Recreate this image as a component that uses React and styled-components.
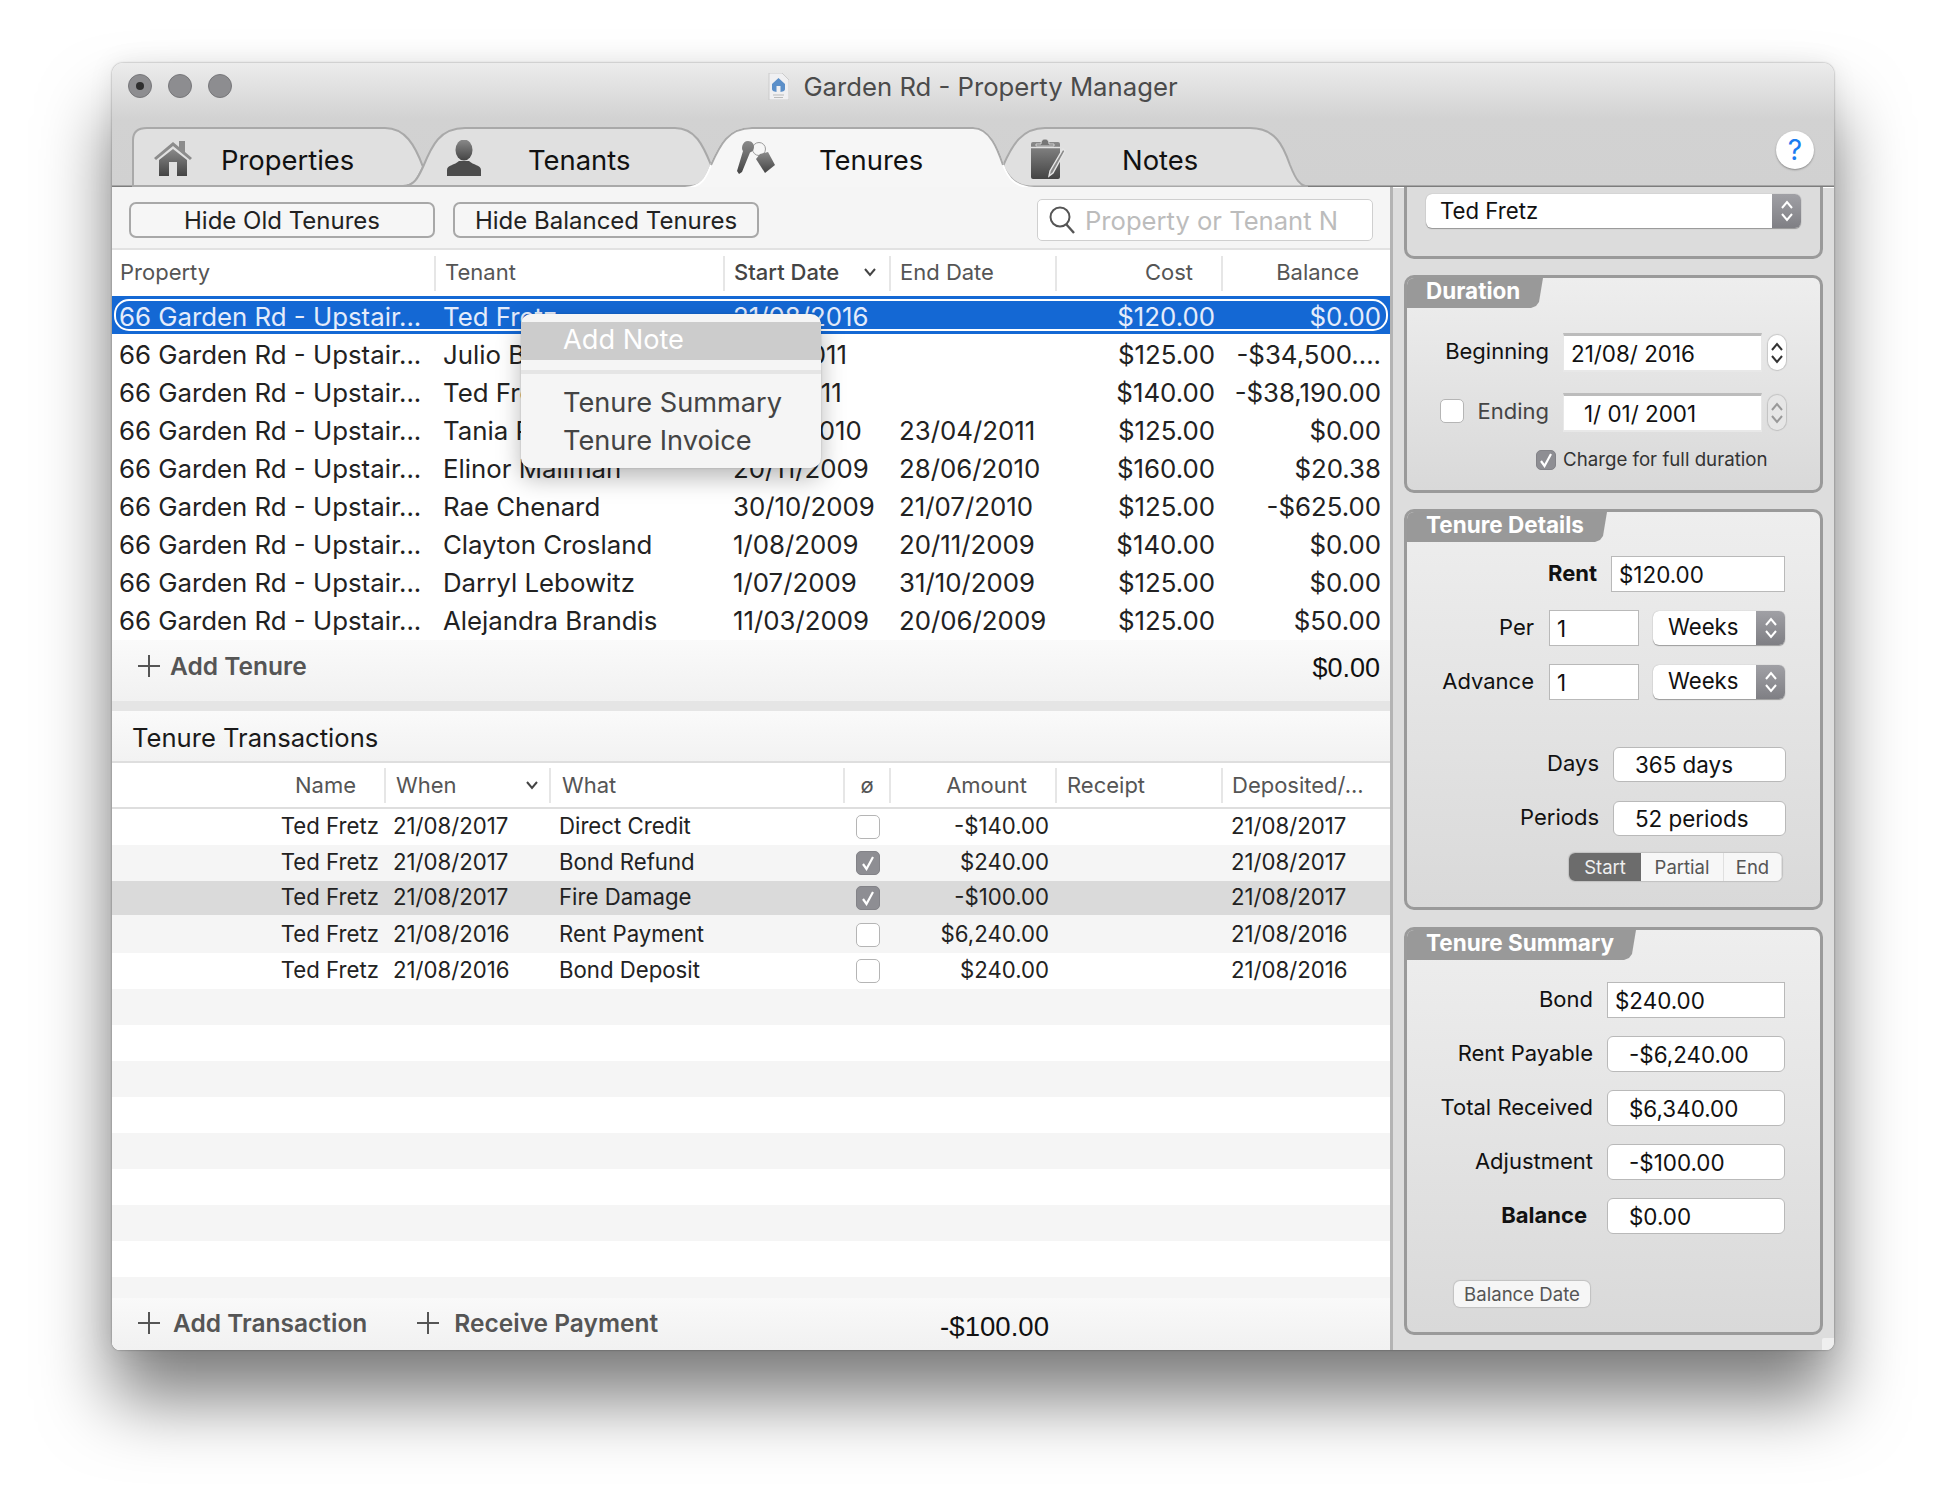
import React from 'react'
import styled, { createGlobalStyle } from 'styled-components'

const UI = `Inter, "Open Sans", sans-serif`
const HELV = `"Liberation Sans", Arial, sans-serif`

const GlobalStyle = createGlobalStyle`
  html, body { margin: 0; background: #fff; overflow: hidden; }
  body { font-family: ${UI}; color: #222; }
  * { box-sizing: border-box; }
`

const Page = styled.div`
  width: 1946px;
  height: 1510px;
  padding: 63px 0 0 112px;
`

const Window = styled.div`
  position: relative;
  width: 1722px;
  height: 1287px;
  display: flex;
  flex-direction: column;
  border-radius: 11px 11px 8px 8px;
  overflow: hidden;
`

const Shadow = styled.div`
  width: 1722px;
  height: 1287px;
  border-radius: 11px 11px 8px 8px;
  box-shadow: 0 50px 70px rgba(0, 0, 0, 0.5), 0 0 26px rgba(0, 0, 0, 0.08), 0 0 2px rgba(0, 0, 0, 0.45);
`

const TitleArea = styled.div`
  position: relative;
  height: 124px;
  flex: none;
  background: linear-gradient(#ececec 0, #d2d2d2 56px, #d1d1d1 100%);
`

const TitleBar = styled.div`
  position: relative;
  height: 46px;
  display: flex;
  align-items: center;
  justify-content: center;
  gap: 14px;
`

const Lights = styled.div`
  position: absolute;
  left: 16px;
  top: 11px;
  display: flex;
  gap: 16px;
`

const Light = styled.span`
  width: 24px;
  height: 24px;
  border-radius: 50%;
  background: #8d8d90;
  border: 1px solid #77777a;
  display: flex;
  align-items: center;
  justify-content: center;
  &::after {
    content: '';
    width: ${p => (p.$dot ? '8px' : '0')};
    height: ${p => (p.$dot ? '8px' : '0')};
    border-radius: 50%;
    background: #2e2e2e;
  }
`

const WindowTitle = styled.span`
  font-size: 25.7px;
  color: #4b4b4b;
  white-space: nowrap;
`

const TabShapes = styled.svg`
  position: absolute;
  left: 0;
  bottom: 0;
  display: block;
`

const TabRow = styled.div`
  position: relative;
  height: 78px;
  display: flex;
  padding: 19px 0 0 21px;
`

const Tab = styled.div`
  width: ${p => p.$w}px;
  height: 60px;
  display: flex;
  align-items: center;
  padding-top: 4px;
  padding-left: ${p => p.$pad}px;
  font-size: 27.4px;
  color: #111;
`

const TabIcon = styled.span`
  width: ${p => p.$slot}px;
  flex: none;
  display: flex;
  align-items: center;
  margin-top: -4px;
`

const Help = styled.div`
  position: absolute;
  left: 1664px;
  top: 22px;
  width: 38px;
  height: 38px;
  border-radius: 50%;
  background: #fff;
  box-shadow: 0 1px 2px rgba(0, 0, 0, 0.35);
  display: flex;
  align-items: center;
  justify-content: center;
  font-size: 28px;
  color: #1a7cf0;
`

const Main = styled.div`
  flex: 1;
  min-height: 0;
  display: flex;
`

const LeftPane = styled.div`
  position: relative;
  width: 1278px;
  flex: none;
  display: flex;
  flex-direction: column;
  background: #fff;
`

const Toolbar = styled.div`
  height: 63px;
  flex: none;
  display: flex;
  align-items: center;
  padding: 5px 17px 0;
  gap: 18px;
  background: #f5f5f5;
  border-bottom: 2px solid #e2e2e2;
`

const ToolButton = styled.div`
  width: 306px;
  height: 36px;
  border-radius: 7px;
  border: 2px solid #a8a8a8;
  background: #f6f6f6;
  display: flex;
  align-items: center;
  justify-content: center;
  font-size: 24px;
  color: #222;
`

const Search = styled.div`
  width: 336px;
  height: 42px;
  margin-left: auto;
  border-radius: 5px;
  background: #fff;
  border: 1px solid #cfcfcf;
  display: flex;
  align-items: center;
  gap: 10px;
  padding-left: 11px;
  font-size: 25.6px;
  color: #bcbcbc;
  white-space: nowrap;
  overflow: hidden;
`

const SearchText = styled.span`
  padding-top: 1px;
`

const HeadRow = styled.div`
  height: ${p => p.$h}px;
  flex: none;
  display: grid;
  grid-template-columns: ${p => p.$cols};
  align-items: center;
  background: #fff;
  font-size: 22px;
  color: #555;
  padding-left: ${p => p.$inset || 0}px;
  & > div {
    padding-bottom: ${p => p.$lift || 0}px;
  }
`

const HeadCell = styled.div`
  height: 35px;
  display: flex;
  align-items: center;
  justify-content: ${p => (p.$align === 'right' ? 'flex-end' : p.$align === 'center' ? 'center' : 'space-between')};
  padding: 0 ${p => p.$pr || 0}px 0 ${p => p.$pl || 0}px;
  border-right: ${p => (p.$last ? 'none' : '2px solid #e6e6e6')};
  font-weight: ${p => (p.$sorted ? 500 : 400)};
  color: ${p => (p.$sorted ? '#444' : '#555')};
`

const Chevron = () => (
  <svg width="14" height="10" viewBox="0 0 14 10">
    <path d="M2 2 L7 8 L12 2" fill="none" stroke="#444" strokeWidth="2" />
  </svg>
)

const TenureBody = styled.div`
  height: 344px;
  flex: none;
  display: grid;
  grid-auto-rows: 38px;
`

const TenureRow = styled.div`
  position: relative;
  display: grid;
  grid-template-columns: 323px 290px 166px 166px 150px 166px;
  align-items: center;
  padding: 2px 0 0 8px;
  font-size: 25.8px;
  white-space: nowrap;
  color: ${p => (p.$selected ? '#e4ecfb' : '#222')};
  background: ${p => (p.$selected ? '#1468d4' : 'transparent')};
  &::after {
    content: '';
    display: ${p => (p.$selected ? 'block' : 'none')};
    position: absolute;
    left: 2px;
    right: 2px;
    top: 3px;
    bottom: 3px;
    border: 2px solid #fff;
    border-radius: 15px;
  }
`

const PropertyText = styled.span`
  margin-left: -1px;
`

const Money = styled.span`
  text-align: right;
`

const SumFooter = styled.div`
  height: 61px;
  flex: none;
  display: flex;
  padding: 0 10px 10px 26px;
  align-items: center;
  justify-content: space-between;
  background: linear-gradient(#fafafa, #f1f1f1);
`

const AddLink = styled.div`
  display: flex;
  align-items: center;
  gap: ${p => p.$gap || 10}px;
  margin-left: ${p => p.$ml || 0}px;
  font-size: 24.5px;
  font-weight: 600;
  color: #555;
  white-space: nowrap;
`

const Plus = () => (
  <svg width="22" height="22" viewBox="0 0 22 22">
    <path d="M11 0 V22 M0 11 H22" stroke="#555" strokeWidth="2" />
  </svg>
)

const Total = styled.span`
  font-family: ${HELV};
  font-size: 27px;
  color: #111;
`

const SumTotal = styled(Total)`
  margin-top: 5px;
`

const SplitBar = styled.div`
  height: 10px;
  flex: none;
  background: #e5e5e5;
`

const SectionTitle = styled.div`
  height: 52px;
  flex: none;
  display: flex;
  align-items: center;
  padding: 2px 0 0 20px;
  font-size: 25.6px;
  color: #1a1a1a;
  background: linear-gradient(#fafafa, #f2f2f2);
  border-bottom: 2px solid #dedede;
`

const TransBody = styled.div`
  flex: 1;
  min-height: 0;
  overflow: hidden;
  border-top: 2px solid #dedede;
  display: grid;
  grid-auto-rows: 36px;
`

const TransRow = styled.div`
  display: grid;
  grid-template-columns: 267px 180px 297px 35px 158px 182px 159px;
  align-items: center;
  padding-bottom: 3px;
  font-size: 22.2px;
  white-space: nowrap;
  color: #222;
  background: ${p => (p.$selected ? '#dadada' : p.$odd ? '#f5f5f5' : '#fff')};
  border-bottom: ${p => (p.$selected ? '2px solid #f5f5f5' : 'none')};
`

const RightText = styled.span`
  text-align: right;
`

const WhenText = styled.span`
  padding-left: 14px;
`

const VoidCell = styled.span`
  margin-top: 3px;
`

const Box = styled.span`
  width: ${p => p.$size || 24}px;
  height: ${p => p.$size || 24}px;
  flex: none;
  border-radius: 5px;
  display: flex;
  align-items: center;
  justify-content: center;
  background: ${p => (p.$on ? '#8e8e93' : '#fff')};
  border: 1px solid ${p => (p.$on ? '#838388' : '#b5b5b5')};
`

const Checkbox = ({ on, size }) => (
  <Box $on={on} $size={size}>
    {on && (
      <svg width="14" height="16" viewBox="0 0 14 16">
        <path d="M2 9 L5.5 14 L12 2" fill="none" stroke="#fff" strokeWidth="2.2" />
      </svg>
    )}
  </Box>
)

const TransFooter = styled.div`
  height: 52px;
  flex: none;
  display: flex;
  align-items: center;
  padding: 0 0 2px 26px;
  background: linear-gradient(#f9f9f9, #f1f1f1);
`

const TransTotal = styled(Total)`
  margin: 8px 0 0 282px;
  font-size: 27.6px;
`

const ContextMenu = styled.div`
  position: absolute;
  left: 409px;
  top: 127px;
  width: 300px;
  height: 154px;
  padding-top: 8px;
  border-radius: 10px;
  background: #f5f5f5;
  box-shadow: 0 10px 24px rgba(0, 0, 0, 0.28), 0 0 2px rgba(0, 0, 0, 0.2);
  font-size: 27.2px;
  color: #444;
`

const MenuItem = styled.div`
  height: 38px;
  display: flex;
  align-items: center;
  padding: 0 0 3px 42px;
  background: ${p => (p.$active ? '#cccccc' : 'transparent')};
  color: ${p => (p.$active ? '#fff' : '#444')};
`

const MenuRule = styled.div`
  height: 4px;
  margin: 10px 0 11px;
  background: #e5e5e5;
`

const RightPane = styled.div`
  flex: 1;
  display: flex;
  flex-direction: column;
  gap: 16px;
  padding: 0 11px 0 11px;
  background: #dddddd;
  border-left: 3px solid #b4b4b4;
  box-shadow: inset 0 1px 0 #fff;
`

const Group = styled.div`
  height: ${p => p.$h}px;
  flex: none;
  margin-top: ${p => p.$mt || 0}px;
  display: flex;
  flex-direction: column;
  align-items: flex-start;
  border: 3px solid #9a9a9a;
  border-top-width: ${p => (p.$clipped ? 0 : 3)}px;
  border-radius: ${p => (p.$clipped ? '0 0 10px 10px' : '10px')};
  background: linear-gradient(#eeeeee, #d9d9d9);
  overflow: hidden;
`

const TopGroup = styled(Group)`
  padding: 7px 0 0 19px;
  background: #dcdcdc;
`

const GroupTab = styled.div`
  width: ${p => p.$w}px;
  height: 30px;
  flex: none;
  display: flex;
  align-items: center;
  padding: 0 0 5px 19px;
  background: #999999;
  font-size: 22.5px;
  font-weight: 700;
  color: #fff;
  white-space: nowrap;
  clip-path: polygon(0 0, 100% 0, calc(100% - 4px) calc(100% - 6px), calc(100% - 7px) calc(100% - 2px), calc(100% - 12px) 100%, 0 100%);
`

const FieldRow = styled.div`
  display: flex;
  align-items: center;
  margin-top: ${p => p.$mt}px;
  padding-left: ${p => p.$pl || 0}px;
`

const Label = styled.div`
  width: ${p => p.$w}px;
  flex: none;
  display: flex;
  align-items: center;
  justify-content: flex-end;
  gap: 13px;
  padding: 0 ${p => p.$pr || 0}px 3px 0;
  margin-right: ${p => p.$gap || 14}px;
  font-size: 22px;
  font-weight: ${p => (p.$bold ? 700 : 400)};
  color: ${p => p.$color || '#111'};
  white-space: nowrap;
`

const Field = styled.div`
  width: ${p => p.$w}px;
  height: ${p => p.$h || 36}px;
  flex: none;
  display: flex;
  align-items: center;
  padding-left: ${p => p.$pl || 7}px;
  font-size: 22.4px;
  color: #111;
  white-space: nowrap;
  background: #fff;
  border: 1px solid #b9b9b9;
  border-radius: ${p => (p.$round ? 6 : 0)}px;
`

const DateField = styled(Field)`
  height: 39px;
  border-width: 3px 1px 2px;
  border-color: #bcbcbc #e8e8e8 #e8e8e8;
`

const Stepper = styled.div`
  width: 18px;
  height: 35px;
  margin-left: 6px;
  flex: none;
  border-radius: 9px;
  background: ${p => (p.$off ? '#e6e6e6' : '#fff')};
  box-shadow: 0 0 1px 1px rgba(0, 0, 0, 0.14);
  display: flex;
  align-items: center;
  justify-content: center;
`

const UpDown = ({ color = '#fff', width = 16, height = 26, sw = 2 }) => (
  <svg width={width} height={height} viewBox="0 0 16 26">
    <path d="M3 10 L8 4 L13 10 M3 16 L8 22 L13 16" fill="none" stroke={color} strokeWidth={sw} />
  </svg>
)

const SelectBox = styled.div`
  width: ${p => p.$w}px;
  height: 34px;
  flex: none;
  margin-left: ${p => p.$ml || 0}px;
  display: flex;
  background: #fff;
  border-radius: 6px;
  overflow: hidden;
  box-shadow: 0 1px 1px rgba(0, 0, 0, 0.3), 0 0 1px rgba(0, 0, 0, 0.3);
  font-size: 22.2px;
  color: #111;
`

const SelectValue = styled.span`
  flex: 1;
  display: flex;
  align-items: center;
  padding: 0 0 ${p => p.$pb || 3}px ${p => p.$pl}px;
`

const SelectArrow = styled.span`
  width: 29px;
  flex: none;
  display: flex;
  align-items: center;
  justify-content: center;
  background: linear-gradient(#a0a0a5, #7f7f84);
`

const SmallText = styled.span`
  margin-left: 7px;
  font-size: 18.7px;
  color: #333;
  white-space: nowrap;
`

const Segments = styled.div`
  width: 213px;
  height: 28px;
  display: flex;
  border-radius: 6px;
  overflow: hidden;
  box-shadow: 0 0 1px 1px rgba(0, 0, 0, 0.12);
  background: #f7f7f7;
`

const Segment = styled.span`
  width: ${p => p.$w}px;
  flex: ${p => (p.$w ? 'none' : 1)};
  display: flex;
  align-items: center;
  justify-content: center;
  font-size: 18.5px;
  color: ${p => (p.$on ? '#f0f0f0' : '#555')};
  background: ${p => (p.$on ? '#6c6c6c' : 'transparent')};
  border-right: ${p => (p.$on ? 'none' : '1px solid #e0e0e0')};
`

const SmallButton = styled.div`
  width: 136px;
  height: 26px;
  margin-left: 47px;
  border-radius: 6px;
  background: #f6f6f6;
  box-shadow: 0 0 1px 1px rgba(0, 0, 0, 0.12);
  display: flex;
  align-items: center;
  justify-content: center;
  font-size: 18.6px;
  color: #555;
  white-space: nowrap;
`

const ResizeCorner = styled.div`
  position: absolute;
  right: 0;
  bottom: 0;
  width: 12px;
  height: 12px;
  background: #efefef;
  border-top-left-radius: 2px;
`

const Shade = ({ id }) => (
  <defs>
    <linearGradient id={id} x1="0" y1="0" x2="0" y2="1">
      <stop offset="0" stopColor="#8a8a8a" />
      <stop offset="1" stopColor="#444" />
    </linearGradient>
  </defs>
)

const HouseIcon = () => (
  <svg width="38" height="36" viewBox="0 0 38 36">
    <Shade id="house" />
    <path d="M0 18 L19 2 L25 7 V1 L31 1 V12 L38 18 L36 20 L19 6 L2 20 Z" fill="#8c8c8c" />
    <path d="M5 20 L19 9 L33 20 V36 H23 V22 H15 V36 H5 Z" fill="url(#house)" />
  </svg>
)

const PersonIcon = () => (
  <svg width="34" height="36" viewBox="0 0 34 36">
    <Shade id="person" />
    <ellipse cx="17" cy="10" rx="8.5" ry="10.5" fill="url(#person)" />
    <path d="M0 36 V30 C0 25 8 25 12 21 H22 C26 25 34 25 34 30 V36 Z" fill="#4c4c4c" />
  </svg>
)

const KeysIcon = () => (
  <svg width="39" height="34" viewBox="0 0 39 34">
    <Shade id="keys" />
    <circle cx="22" cy="8" r="6.5" fill="none" stroke="#999" strokeWidth="1" />
    <path d="M11 0 C15 0 17 3 17 6 C17 9 15 11 13 11.5 L5 31 L2 33 L0 30 L6 10 C4 8 5 0 11 0 Z" fill="url(#keys)" />
    <path d="M23 13 L31 11 L38 24 L28 32 L19 18 Z" fill="url(#keys)" />
  </svg>
)

const ClipboardIcon = () => (
  <svg width="35" height="41" viewBox="0 0 35 41">
    <Shade id="clip" />
    <rect x="0" y="4" width="29" height="37" rx="2" fill="url(#clip)" />
    <path d="M10 6 Q10 1 14 1 Q18 1 18 6 H23 V8 H5 V6 Z" fill="#777" stroke="#e6e6e6" strokeWidth="0.8" />
    <path d="M0 9.5 H29" stroke="#e2e2e2" strokeWidth="1.4" />
    <path d="M32 11 L34 13 L22 35 L18 38 L19 33 Z" fill="#888" stroke="#e6e6e6" strokeWidth="1.4" />
  </svg>
)

const SearchIcon = () => (
  <svg width="26" height="28" viewBox="0 0 26 28" style={{ flex: 'none' }}>
    <circle cx="11" cy="11" r="9.5" fill="none" stroke="#555" strokeWidth="2" />
    <path d="M17 18 L25 27" stroke="#555" strokeWidth="2.4" />
  </svg>
)

const DocIcon = () => (
  <svg width="21" height="27" viewBox="0 0 21 27">
    <path d="M1 0 H14 L21 7 V27 H1 Z" fill="#f0f0f2" stroke="#c4c4c4" strokeWidth="0.8" />
    <path d="M4 11 L10.5 5 L17 11 V16 C17 18 15 19 10.5 19 C6 19 4 18 4 16 Z" fill="#5b8fc9" />
    <path d="M8.5 19 V13 H12.5 V19 Z" fill="#f0f0f2" />
    <path d="M5 22 H16 M6 24.5 H15" stroke="#bbb" strokeWidth="1" />
  </svg>
)

const tenures = [
  ['66 Garden Rd - Upstair...', 'Ted Fretz', '21/08/2016', '', '$120.00', '$0.00'],
  ['66 Garden Rd - Upstair...', 'Julio Bernstein', '1/05/2011', '', '$125.00', '-$34,500....'],
  ['66 Garden Rd - Upstair...', 'Ted Fretz', '1/01/2011', '', '$140.00', '-$38,190.00'],
  ['66 Garden Rd - Upstair...', 'Tania Ruiz', '11/07/2010', '23/04/2011', '$125.00', '$0.00'],
  ['66 Garden Rd - Upstair...', 'Elinor Mailman', '20/11/2009', '28/06/2010', '$160.00', '$20.38'],
  ['66 Garden Rd - Upstair...', 'Rae Chenard', '30/10/2009', '21/07/2010', '$125.00', '-$625.00'],
  ['66 Garden Rd - Upstair...', 'Clayton Crosland', '1/08/2009', '20/11/2009', '$140.00', '$0.00'],
  ['66 Garden Rd - Upstair...', 'Darryl Lebowitz', '1/07/2009', '31/10/2009', '$125.00', '$0.00'],
  ['66 Garden Rd - Upstair...', 'Alejandra Brandis', '11/03/2009', '20/06/2009', '$125.00', '$50.00'],
]

const transactions = [
  ['Ted Fretz', '21/08/2017', 'Direct Credit', false, '-$140.00', '21/08/2017'],
  ['Ted Fretz', '21/08/2017', 'Bond Refund', true, '$240.00', '21/08/2017'],
  ['Ted Fretz', '21/08/2017', 'Fire Damage', true, '-$100.00', '21/08/2017'],
  ['Ted Fretz', '21/08/2016', 'Rent Payment', false, '$6,240.00', '21/08/2016'],
  ['Ted Fretz', '21/08/2016', 'Bond Deposit', false, '$240.00', '21/08/2016'],
]

const summary = [
  ['Rent Payable', '-$6,240.00'],
  ['Total Received', '$6,340.00'],
  ['Adjustment', '-$100.00'],
]

const emptyRows = Array.from({ length: 9 })

const Tabs = () => (
  <TabShapes width="1722" height="68" viewBox="112 119 1722 68">
    <path d="M112 186.5 H1834" stroke="#7d7d7d" strokeWidth="2" />
    <path d="M1003 166 C1012 145 1022 128 1045 128 L1250 128 C1275 128 1283 145 1290 165 C1296 180 1300 186 1308 186.5 L1030 186.5 C1015 186 1008 176 1003 166 Z" fill="#e0e0e0" stroke="#a9a9a9" strokeWidth="2" />
    <path d="M133 186 L133 140 Q133 128 147 128 L385 128 C405 128 415 145 423 167 C418 178 414 186 403 186 Z" fill="#e0e0e0" stroke="#a9a9a9" strokeWidth="2" />
    <path d="M423 167 C432 145 440 128 465 128 L675 128 C695 128 703 145 711 165 C706 178 702 186 690 186 L403 186 C414 186 418 178 423 167 Z" fill="#e0e0e0" stroke="#a9a9a9" strokeWidth="2" />
    <path d="M685 188 C702 187 706 178 711 165 C720 145 728 128 752 128 L973 128 C990 128 998 150 1003 165 C1008 178 1015 187 1034 188 Z" fill="#f6f6f6" stroke="#ffffff" strokeWidth="2" />
    <path d="M711 165 C720 145 728 128 752 128 L973 128 C990 128 998 150 1003 165" fill="none" stroke="#a9a9a9" strokeWidth="2" />
  </TabShapes>
)

const App = () => (
  <Page>
    <GlobalStyle />
    <Shadow>
      <Window>
        <TitleArea>
          <TitleBar>
            <Lights>
              <Light $dot />
              <Light />
              <Light />
            </Lights>
            <DocIcon />
            <WindowTitle>Garden Rd - Property Manager</WindowTitle>
          </TitleBar>
          <Tabs />
          <TabRow>
            <Tab $w={290} $pad={21}><TabIcon $slot={67}><HouseIcon /></TabIcon>Properties</Tab>
            <Tab $w={288} $pad={24}><TabIcon $slot={81}><PersonIcon /></TabIcon>Tenants</Tab>
            <Tab $w={294} $pad={26}><TabIcon $slot={82}><KeysIcon /></TabIcon>Tenures</Tab>
            <Tab $w={300} $pad={26}><TabIcon $slot={91}><ClipboardIcon /></TabIcon>Notes</Tab>
            <Help>?</Help>
          </TabRow>
        </TitleArea>
        <Main>
          <LeftPane>
            <Toolbar>
              <ToolButton>Hide Old Tenures</ToolButton>
              <ToolButton>Hide Balanced Tenures</ToolButton>
              <Search><SearchIcon /><SearchText>Property or Tenant N</SearchText></Search>
            </Toolbar>
            <HeadRow $h={46} $inset={8} $lift={3} $cols="316px 289px 166px 166px 166px 167px">
              <HeadCell>Property</HeadCell>
              <HeadCell $pl={9}>Tenant</HeadCell>
              <HeadCell $pl={9} $pr={12} $sorted>Start Date<Chevron /></HeadCell>
              <HeadCell $pl={9}>End Date</HeadCell>
              <HeadCell $pr={28} $align="right">Cost</HeadCell>
              <HeadCell $pr={31} $align="right" $last>Balance</HeadCell>
            </HeadRow>
            <TenureBody>
              {tenures.map((row, i) => (
                <TenureRow key={i} $selected={i === 0}>
                  <PropertyText>{row[0]}</PropertyText>
                  <span>{row[1]}</span>
                  <span>{row[2]}</span>
                  <span>{row[3]}</span>
                  <Money>{row[4]}</Money>
                  <Money>{row[5]}</Money>
                </TenureRow>
              ))}
            </TenureBody>
            <SumFooter>
              <AddLink><Plus />Add Tenure</AddLink>
              <SumTotal>$0.00</SumTotal>
            </SumFooter>
            <SplitBar />
            <SectionTitle>Tenure Transactions</SectionTitle>
            <HeadRow $h={44} $cols="274px 165px 294px 46px 166px 166px 167px">
              <HeadCell $pr={28} $align="right">Name</HeadCell>
              <HeadCell $pl={10} $pr={10}>When<Chevron /></HeadCell>
              <HeadCell $pl={11}>What</HeadCell>
              <HeadCell $align="center">ø</HeadCell>
              <HeadCell $pr={28} $align="right">Amount</HeadCell>
              <HeadCell $pl={10}>Receipt</HeadCell>
              <HeadCell $pl={9} $last>Deposited/...</HeadCell>
            </HeadRow>
            <TransBody>
              {transactions.map((row, i) => (
                <TransRow key={i} $odd={i % 2 === 1} $selected={i === 2}>
                  <RightText>{row[0]}</RightText>
                  <WhenText>{row[1]}</WhenText>
                  <span>{row[2]}</span>
                  <VoidCell><Checkbox on={row[3]} /></VoidCell>
                  <RightText>{row[4]}</RightText>
                  <span />
                  <span>{row[5]}</span>
                </TransRow>
              ))}
              {emptyRows.map((_, i) => (
                <TransRow key={i} $odd={(i + 5) % 2 === 1} />
              ))}
            </TransBody>
            <TransFooter>
              <AddLink $gap={13}><Plus />Add Transaction</AddLink>
              <AddLink $gap={15} $ml={50}><Plus />Receive Payment</AddLink>
              <TransTotal>-$100.00</TransTotal>
            </TransFooter>
            <ContextMenu>
              <MenuItem $active>Add Note</MenuItem>
              <MenuRule />
              <MenuItem>Tenure Summary</MenuItem>
              <MenuItem>Tenure Invoice</MenuItem>
            </ContextMenu>
          </LeftPane>
          <RightPane>
            <TopGroup $h={72} $clipped>
              <SelectBox $w={375}>
                <SelectValue $pl={14} $pb={1}>Ted Fretz</SelectValue>
                <SelectArrow><UpDown /></SelectArrow>
              </SelectBox>
            </TopGroup>
            <Group $h={218}>
              <GroupTab $w={136}>Duration</GroupTab>
              <FieldRow $mt={25}>
                <Label $w={142}>Beginning</Label>
                <DateField $w={199}>21/08/ 2016</DateField>
                <Stepper><UpDown color="#333" /></Stepper>
              </FieldRow>
              <FieldRow $mt={21}>
                <Label $w={142} $color="#444"><Checkbox />Ending</Label>
                <DateField $w={199} $pl={20}>1/ 01/ 2001</DateField>
                <Stepper $off><UpDown color="#999" /></Stepper>
              </FieldRow>
              <FieldRow $mt={16} $pl={129}>
                <Checkbox on size={20} />
                <SmallText>Charge for full duration</SmallText>
              </FieldRow>
            </Group>
            <Group $h={401}>
              <GroupTab $w={200}>Tenure Details</GroupTab>
              <FieldRow $mt={14}>
                <Label $w={190} $bold>Rent</Label>
                <Field $w={174}>$120.00</Field>
              </FieldRow>
              <FieldRow $mt={18}>
                <Label $w={127} $gap={15}>Per</Label>
                <Field $w={90}>1</Field>
                <SelectBox $w={132} $ml={14}>
                  <SelectValue $pl={15}>Weeks</SelectValue>
                  <SelectArrow><UpDown /></SelectArrow>
                </SelectBox>
              </FieldRow>
              <FieldRow $mt={18}>
                <Label $w={127} $gap={15}>Advance</Label>
                <Field $w={90}>1</Field>
                <SelectBox $w={132} $ml={14}>
                  <SelectValue $pl={15}>Weeks</SelectValue>
                  <SelectArrow><UpDown /></SelectArrow>
                </SelectBox>
              </FieldRow>
              <FieldRow $mt={47}>
                <Label $w={192}>Days</Label>
                <Field $w={173} $h={35} $pl={21} $round>365 days</Field>
              </FieldRow>
              <FieldRow $mt={19}>
                <Label $w={192}>Periods</Label>
                <Field $w={173} $h={35} $pl={21} $round>52 periods</Field>
              </FieldRow>
              <FieldRow $mt={17} $pl={162}>
                <Segments>
                  <Segment $w={72} $on>Start</Segment>
                  <Segment $w={83}>Partial</Segment>
                  <Segment>End</Segment>
                </Segments>
              </FieldRow>
            </Group>
            <Group $h={408} $mt={1}>
              <GroupTab $w={229}>Tenure Summary</GroupTab>
              <FieldRow $mt={22}>
                <Label $w={186}>Bond</Label>
                <Field $w={178}>$240.00</Field>
              </FieldRow>
              {summary.map(([name, value]) => (
                <FieldRow key={name} $mt={18}>
                  <Label $w={186}>{name}</Label>
                  <Field $w={178} $pl={21} $round>{value}</Field>
                </FieldRow>
              ))}
              <FieldRow $mt={18}>
                <Label $w={186} $pr={6} $bold>Balance</Label>
                <Field $w={178} $pl={21} $round>$0.00</Field>
              </FieldRow>
              <FieldRow $mt={47}>
                <SmallButton>Balance Date</SmallButton>
              </FieldRow>
            </Group>
          </RightPane>
        </Main>
        <ResizeCorner />
      </Window>
    </Shadow>
  </Page>
)

export default App
